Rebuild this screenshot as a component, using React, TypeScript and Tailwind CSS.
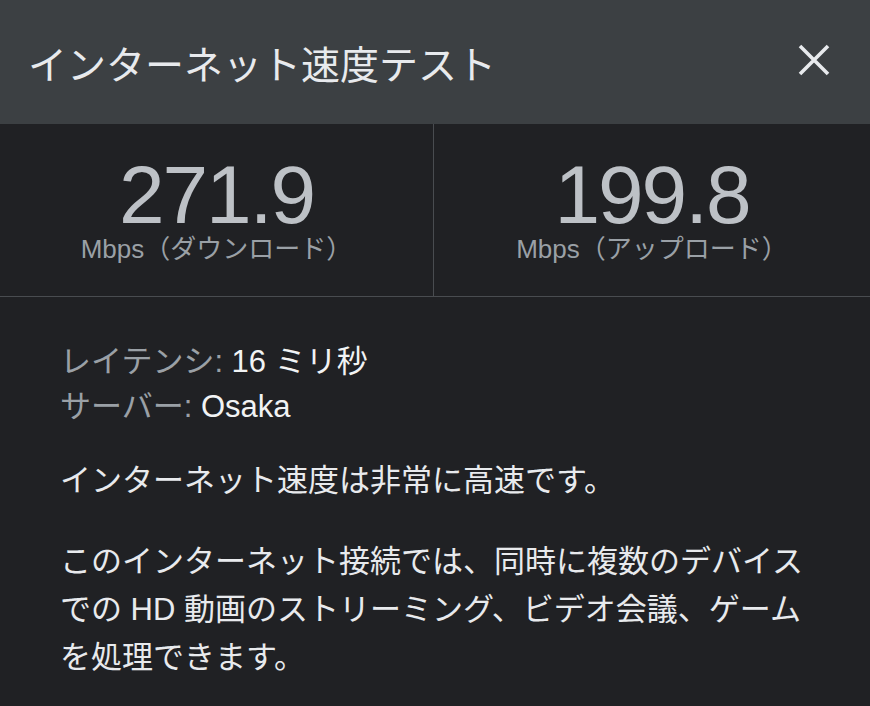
import React from "react";

const font = { fontFamily: '"Liberation Sans", "Noto Sans CJK JP", sans-serif' };

export default function App() {
  return (
    <div
      className="w-[870px] h-[706px] bg-[#202124] overflow-hidden text-[#e8eaed]"
      style={font}
    >
      <div className="h-[124px] bg-[#3c4043] flex items-center justify-between pl-[28px] pr-[40px]">
        <div className="text-[39px] leading-none text-[#e8eaed]" style={{ fontFamily: '"Noto Sans CJK JP", sans-serif' }}>
          インターネット速度テスト
        </div>
        <svg width="32" height="32" viewBox="0 0 32 32" className="-mt-[5px]">
          <path d="M2 2 L30 30 M30 2 L2 30" stroke="#e8eaed" strokeWidth="3.6" strokeLinecap="butt" />
        </svg>
      </div>
      <div className="grid grid-cols-[434px_1fr] h-[173px] border-b border-[#494c50]">
        <div className="border-r border-[#494c50] flex flex-col items-center pt-[31px]">
          <div className="text-[82px] leading-[80px] tracking-[-2px] text-[#bdc1c6]">271.9</div>
          <div className="text-[26px] leading-[28px] text-[#9aa0a6]">Mbps（ダウンロード）</div>
        </div>
        <div className="flex flex-col items-center pt-[31px]">
          <div className="text-[82px] leading-[80px] tracking-[-2px] text-[#bdc1c6]">199.8</div>
          <div className="text-[26px] leading-[28px] text-[#9aa0a6]">Mbps（アップロード）</div>
        </div>
      </div>
      <div className="pl-[60px] pr-[50px] pt-[42px] text-[31px]">
        <div className="leading-[45px]">
          <div>
            <span className="text-[#9aa0a6]">レイテンシ: </span>
            <span className="text-[#f1f3f4]">16 ミリ秒</span>
          </div>
          <div>
            <span className="text-[#9aa0a6]">サーバー: </span>
            <span className="text-[#f1f3f4]">Osaka</span>
          </div>
        </div>
        <p className="leading-[48px] mt-[28px]">インターネット速度は非常に高速です。</p>
        <p className="leading-[48px] mt-[33px]">
          このインターネット接続では、同時に複数のデバイスでの HD 動画のストリーミング、ビデオ会議、ゲームを処理できます。
        </p>
      </div>
    </div>
  );
}
